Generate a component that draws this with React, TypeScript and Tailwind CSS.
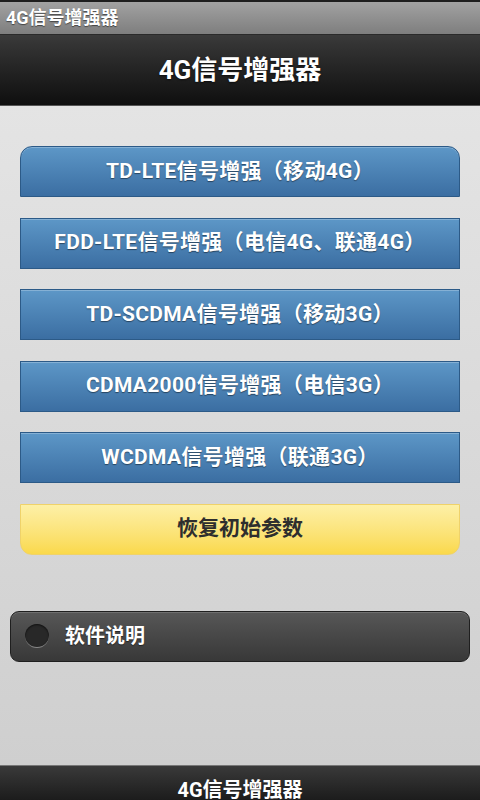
import React from "react";

const font = { fontFamily: "Roboto, 'Noto Sans CJK SC', sans-serif" };

function BlueButton({ label, roundedTop }: { label: string; roundedTop?: boolean }) {
  return (
    <div
      className={
        "h-[51px] flex items-center justify-center border border-[#2c5a87] bg-gradient-to-b from-[#5d97c7] to-[#3b6ea2] text-white font-bold text-[21px] tracking-[0.3px] [text-shadow:0_1px_1px_rgba(0,0,0,0.45)] shadow-[inset_0_1px_0_rgba(255,255,255,0.25)] " +
        (roundedTop ? "rounded-t-[12px]" : "")
      }
    >
      {label}
    </div>
  );
}

export default function App() {
  return (
    <div className="w-[480px] h-[800px] flex flex-col overflow-hidden" style={font}>
      {/* status bar */}
      <div className="h-[35px] border-t-2 border-t-[#1e1e1e] border-b border-b-[#2a2a2a] bg-gradient-to-b from-[#a2a2a2] to-[#7e7e7e] flex items-center px-[6px]">
        <span className="text-white font-bold text-[18px] leading-none [text-shadow:0_1px_1px_rgba(0,0,0,0.5)]">4G信号增强器</span>
      </div>
      {/* header */}
      <div className="h-[71px] bg-gradient-to-b from-[#3a3a3a] to-[#0f0f0f] border-b border-b-[#555] flex items-center justify-center">
        <span className="text-white font-bold text-[26px] leading-none [text-shadow:0_1px_2px_rgba(0,0,0,0.6)]">4G信号增强器</span>
      </div>
      {/* content */}
      <div className="flex-1 bg-gradient-to-b from-[#e4e4e4] to-[#cfcfcf] flex flex-col pt-[40px]">
        <div className="px-[20px] flex flex-col gap-[20.5px]">
          <BlueButton label="TD-LTE信号增强（移动4G）" roundedTop />
          <BlueButton label="FDD-LTE信号增强（电信4G、联通4G）" />
          <BlueButton label="TD-SCDMA信号增强（移动3G）" />
          <BlueButton label="CDMA2000信号增强（电信3G）" />
          <BlueButton label="WCDMA信号增强（联通3G）" />
          <div className="h-[51px] flex items-center justify-center rounded-b-[12px] border border-[#efd26a] bg-gradient-to-b from-[#fdf0a6] to-[#fad94a] text-[#2e2e2e] font-bold text-[21px]">
            恢复初始参数
          </div>
        </div>
        <div className="px-[10px] mt-[56px]">
          <div className="h-[51px] rounded-[9px] border border-[#1f1f1f] bg-gradient-to-b from-[#575757] to-[#383838] shadow-[inset_0_1px_0_rgba(255,255,255,0.15)] flex items-center pl-[14px] gap-[16px]">
            <div className="w-[24px] h-[24px] rounded-full bg-[#282828] border-b border-b-[#8a8a8a] shadow-[inset_0_1px_2px_rgba(0,0,0,0.6)]" />
            <span className="text-white font-semibold text-[20px] leading-none [text-shadow:0_1px_1px_rgba(0,0,0,0.5)]">软件说明</span>
          </div>
        </div>
      </div>
      {/* footer */}
      <div className="h-[35px] border-t border-t-[#777] bg-gradient-to-b from-[#3a3a3a] to-[#1c1c1c] flex justify-center pt-[14px]">
        <span className="text-white font-bold text-[20px] leading-none">4G信号增强器</span>
      </div>
    </div>
  );
}
